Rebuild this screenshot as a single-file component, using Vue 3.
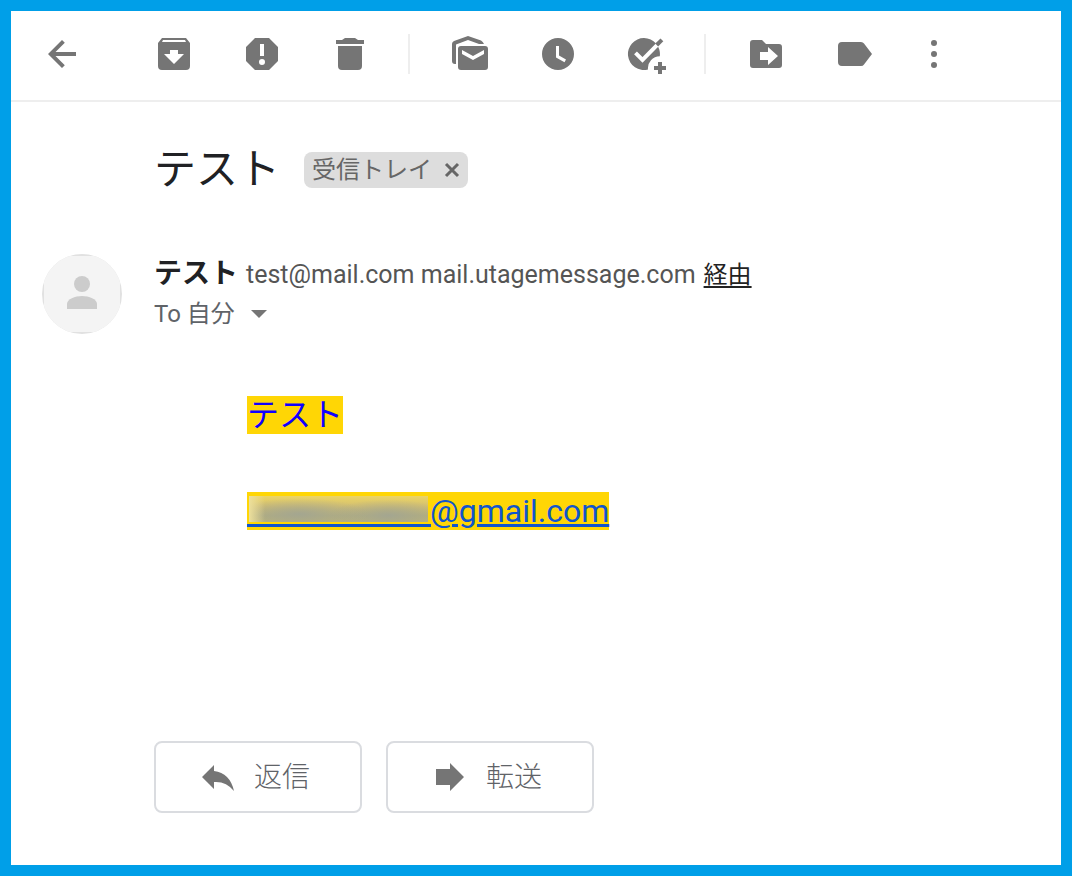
<!-- メール詳細画面 -->
<template>
  <div class="mail-view">
    <header class="toolbar">
      <button class="icon-button" type="button" aria-label="戻る">
        <svg viewBox="0 0 40 40"><path d="M34 18H13.5l9.3-9.3L20 6 6 20l14 14 2.8-2.7L13.5 22H34z" /></svg>
      </button>

      <div v-for="(group, index) in toolGroups" :key="index" class="tool-group">
        <button v-for="tool in group" :key="tool.label" class="icon-button" type="button" :aria-label="tool.label">
          <svg viewBox="0 0 40 40"><path fill-rule="evenodd" :d="tool.path" /></svg>
        </button>
        <!-- ToDo は切り抜きがあるので線で描く -->
        <button v-if="index === 1" class="icon-button" type="button" aria-label="ToDo リストに追加">
          <svg viewBox="0 0 40 40">
            <path d="M33.8 22.2A16 16 0 1 0 22 35.5 12 12 0 0 1 33.8 22.2z" />
            <path class="check" d="M9.5 18.8l7 7L32 10.2" />
            <path class="pen" d="M30.7 11l5.2-5.2" />
            <path d="M32 28h4v4h4v4h-4v4h-4v-4h-4v-4h4z" />
          </svg>
        </button>
      </div>

      <button class="icon-button more" type="button" aria-label="その他">
        <svg viewBox="0 0 40 40">
          <circle cx="20" cy="9" r="3" />
          <circle cx="20" cy="20" r="3" />
          <circle cx="20" cy="31" r="3" />
        </svg>
      </button>
    </header>

    <main class="content">
      <div class="subject">
        <h1>テスト</h1>
        <span v-if="inInbox" class="tag">
          受信トレイ
          <button type="button" aria-label="受信トレイのラベルを削除" @click="removeTag">
            <svg viewBox="0 0 16 16"><path d="M2 2l12 12M14 2L2 14" /></svg>
          </button>
        </span>
      </div>

      <div class="sender">
        <svg class="avatar" viewBox="0 0 80 80">
          <clipPath id="avatar-clip"><circle cx="40" cy="40" r="40" /></clipPath>
          <g clip-path="url(#avatar-clip)">
            <rect width="80" height="80" fill="#e1e1e1" />
            <rect x="2" y="2" width="76" height="76" fill="#f4f4f4" />
          </g>
          <circle cx="40" cy="30" r="8" fill="#ccc" />
          <path d="M25 55v-5c0-5 8-8 15-8s15 3 15 8v5z" fill="#ccc" />
        </svg>
        <div class="sender-info">
          <p class="from">
            <strong>テスト</strong>
            <span class="address">test@mail.com mail.utagemessage.com</span>
            <a href="#">経由</a>
          </p>
          <p class="to">
            To 自分
            <button type="button" aria-label="詳細を表示">
              <svg viewBox="0 0 16 8"><path d="M0 0h16L8 8z" /></svg>
            </button>
          </p>
        </div>
      </div>

      <div class="body">
        <p><span class="mark">テスト</span></p>
        <p><br /></p>
        <p><a class="mark" href="#"><span class="hidden-name"></span>@gmail.com</a></p>
      </div>

      <div class="actions">
        <button v-for="action in actions" :key="action.label" type="button">
          <svg viewBox="0 0 32 32"><path :d="action.path" /></svg>
          <span>{{ action.label }}</span>
        </button>
      </div>
    </main>
  </div>
</template>

<script setup>
import { ref } from 'vue';

// --- ツールバー ---
const toolGroups = [
  [
    {
      label: 'アーカイブ',
      path: 'M8 4h24l4 5v23a4 4 0 0 1-4 4H8a4 4 0 0 1-4-4V9zM9 6L8 8h24l-1-2zM16 16v4h-6l10 10 10-10h-6v-4z',
    },
    {
      label: '迷惑メールを報告',
      path: 'M13 4h14l9 9v14l-9 9H13l-9-9V13zM18 10v12h4V10zM17 28a3 3 0 1 0 6 0 3 3 0 1 0-6 0z',
    },
    {
      label: '削除',
      path: 'M6 6h6l3-2h10l3 2h6v4H6zM8 12h24v20a4 4 0 0 1-4 4H12a4 4 0 0 1-4-4z',
    },
  ],
  [
    {
      label: '未読にする',
      path: 'M11 12h24a3 3 0 0 1 3 3v18a3 3 0 0 1-3 3H11a3 3 0 0 1-3-3V15a3 3 0 0 1 3-3zM12 16v4l11 6 11-6v-4l-11 6zM6 30H5a3 3 0 0 1-3-3V10q0-2 2-3l14-5 13 4.500q2 1 3 3.500h-5L18 6 6 10.500z',
    },
    {
      label: 'スヌーズ',
      path: 'M20 4a16 16 0 1 0 0 32 16 16 0 1 0 0-32zM18 12h3v9.500l7 4-1.500 2.700L18 23.500z',
    },
  ],
  [
    {
      label: '移動',
      path: 'M7 6h9l4 4h13a3 3 0 0 1 3 3v18a3 3 0 0 1-3 3H7a3 3 0 0 1-3-3V9a3 3 0 0 1 3-3zM14 18v8h8v5l10-9-10-9v5z',
    },
    {
      label: 'ラベル',
      path: 'M8 8h19q2 0 3 1.500L38 20l-8 10.500q-1 1.500-3 1.500H8a4 4 0 0 1-4-4V12a4 4 0 0 1 4-4z',
    },
  ],
];

// --- 返信・転送 ---
const actions = [
  { label: '返信', path: 'M0 16L12 4v6q16 2 20 20-8-10-20-9v7z' },
  { label: '転送', path: 'M2 8h14V2l14 14-14 14v-6H2z' },
];

// --- ラベル ---
const inInbox = ref(true);

const removeTag = () => {
  inInbox.value = false;
};
</script>

<style>
body {
  margin: 0;
}
</style>

<style scoped>
.mail-view {
  box-sizing: border-box;
  min-height: 100vh;
  border: 11px solid #009fe8;
  background: #fff;
  color: #202124;
  font-family: Roboto, "Noto Sans CJK JP", sans-serif;
}

h1, p {
  margin: 0;
}

button {
  border: none;
  padding: 0;
  background: none;
  font-family: inherit;
  cursor: pointer;
}

svg {
  display: block;
  fill: #757575;
}

.toolbar {
  display: flex;
  padding: 23px 31px 26px;
  border-bottom: 2px solid #eee;
}

.icon-button, .icon-button svg {
  width: 40px;
  height: 40px;
}

.tool-group {
  display: flex;
  gap: 48px;
  margin-left: 40px;
  padding-right: 38px;
  border-right: 2px solid #eee;
}

.tool-group:nth-child(2) {
  margin-left: 72px;
}

.tool-group:nth-child(4) {
  padding-right: 0;
  border-right: none;
}

.more {
  margin-left: 40px;
}

.check, .pen {
  fill: none;
  stroke: #fff;
  stroke-width: 4;
}

.pen {
  stroke: #757575;
}

.content {
  padding: 38px 31px 52px;
}

.subject {
  display: flex;
  align-items: center;
  gap: 24px;
  margin: 0 0 54px 112px;
}

h1 {
  font-size: 42px;
  line-height: 60px;
  font-weight: 400;
}

.tag {
  display: flex;
  align-items: center;
  gap: 12px;
  height: 36px;
  padding: 0 8px;
  border-radius: 8px;
  background: #ddd;
  color: #666;
  font-size: 24px;
  line-height: 36px;
}

.tag svg {
  width: 16px;
  height: 16px;
  stroke: #666;
  stroke-width: 3;
}

.sender {
  display: flex;
  gap: 32px;
}

.avatar {
  flex: none;
  width: 80px;
  height: 80px;
}

.from, .to {
  display: flex;
  height: 40px;
  font-size: 24px;
  line-height: 40px;
}

.from {
  align-items: baseline;
  gap: 8px;
}

.from strong {
  font-size: 28px;
}

.address {
  color: #555;
  font-size: 25px;
}

.from a {
  color: #222;
  text-underline-offset: 3px;
}

.to {
  align-items: center;
  gap: 16px;
  color: #5f6368;
}

.to svg {
  width: 16px;
  height: 8px;
}

.body {
  margin: 57px 0 206px 205px;
  font-size: 32px;
  line-height: 48px;
}

.mark {
  background: #ffd605;
  color: #10f;
}

a.mark {
  color: #15c;
  text-decoration-thickness: 3px;
  text-underline-offset: 2px;
}

/* 伏せたアドレス部分 */
.hidden-name {
  display: inline-block;
  box-sizing: border-box;
  width: 183px;
  height: 31px;
  padding: 0 2px 2px;
  border-bottom: 3px solid #15c;
  background:
    linear-gradient(90deg, #ecdf9c, #ecdf9c00 16px),
    radial-gradient(ellipse 70px 16px at 28% 70%, #a4a690, #a4a69000),
    radial-gradient(ellipse 60px 16px at 78% 75%, #a4a690, #a4a69000),
    linear-gradient(#ecd565, #d4c070 40%, #b6b07a 75%, #bcb478);
  background-origin: content-box;
  background-clip: content-box;
  background-repeat: no-repeat;
  vertical-align: -5px;
}

.actions {
  display: flex;
  gap: 24px;
  margin-left: 112px;
}

.actions button {
  display: flex;
  align-items: center;
  gap: 20px;
  box-sizing: border-box;
  min-width: 208px;
  height: 72px;
  padding: 0 46px;
  border: 2px solid #dadce0;
  border-radius: 8px;
  color: #5f6368;
  font-size: 28px;
  font-weight: 300;
}

.actions span {
  padding-bottom: 4px;
}

.actions svg {
  width: 32px;
  height: 32px;
}
</style>
